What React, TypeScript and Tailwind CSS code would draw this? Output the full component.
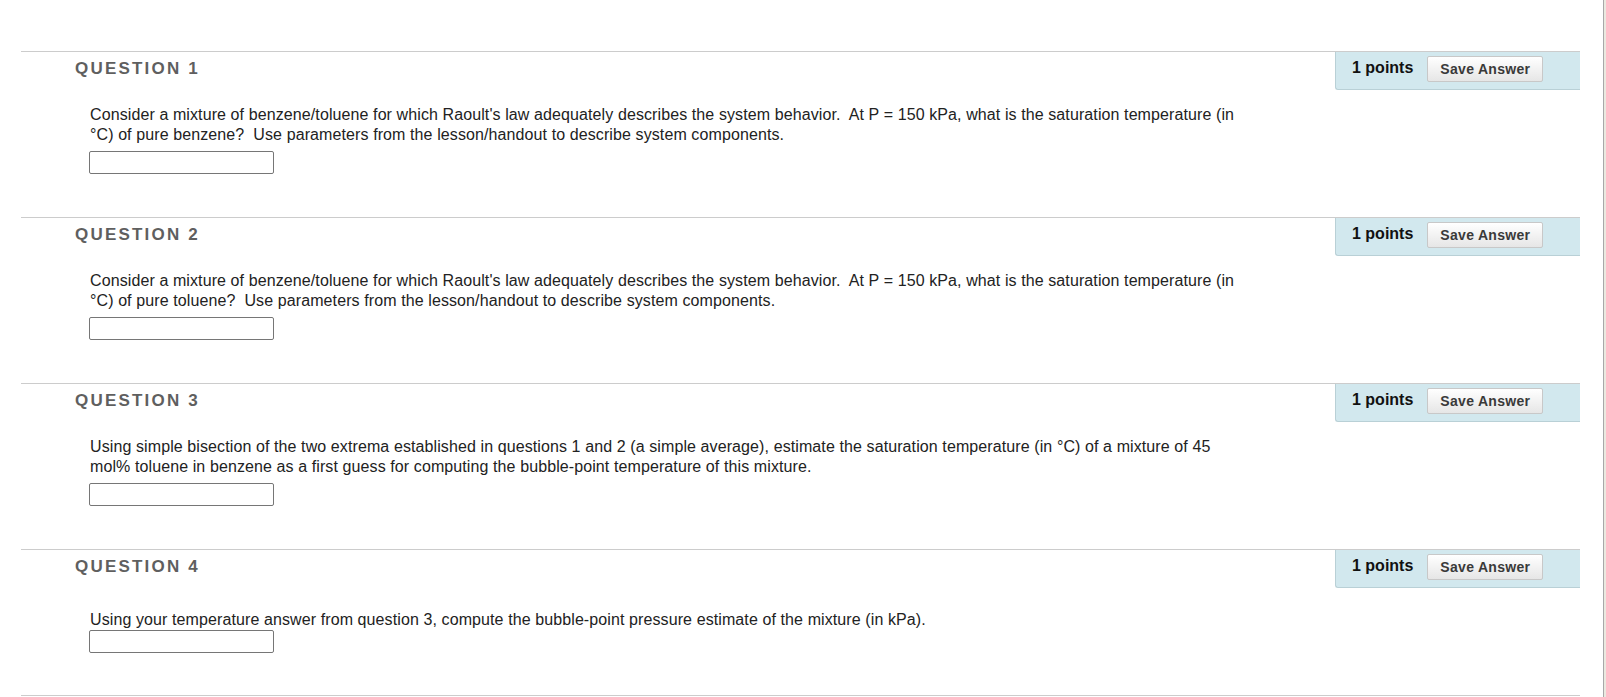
import React from 'react';

interface Question {
  id: number;
  text: string;
}

const questions: Question[] = [
  {
    id: 1,
    text: "Consider a mixture of benzene/toluene for which Raoult's law adequately describes the system behavior.\u00a0 At P = 150 kPa, what is the saturation temperature (in °C) of pure benzene?\u00a0 Use parameters from the lesson/handout to describe system components.",
  },
  {
    id: 2,
    text: "Consider a mixture of benzene/toluene for which Raoult's law adequately describes the system behavior.\u00a0 At P = 150 kPa, what is the saturation temperature (in °C) of pure toluene?\u00a0 Use parameters from the lesson/handout to describe system components.",
  },
  {
    id: 3,
    text: 'Using simple bisection of the two extrema established in questions 1 and 2 (a simple average), estimate the saturation temperature (in °C) of a mixture of 45 mol% toluene in benzene as a first guess for computing the bubble-point temperature of this mixture.',
  },
  {
    id: 4,
    text: 'Using your temperature answer from question 3, compute the bubble-point pressure estimate of the mixture (in kPa).',
  },
];

const QuestionBlock: React.FC<{ q: Question; last: boolean }> = ({ q, last }) => (
  <div className={`border-t border-[#cccccc] ${last ? 'h-[146px]' : 'h-[166px]'}`}>
    {/* header row */}
    <div className="flex justify-between">
      <h3 className="pl-[54px] pt-[7px] text-[17px] leading-[20px] font-bold tracking-[2.2px] text-[#5f5f5f]">
        QUESTION {q.id}
      </h3>
      <div className="w-[245px] h-[38px] bg-[#d2e8ee] border-l border-b border-[#b9d0d6] rounded-bl-[3px] flex items-start pl-[16px] pt-[4px]">
        <span className="text-[16px] leading-[20px] font-bold text-[#111] mt-[2px]">1 points</span>
        <button className="ml-[14px] w-[116px] h-[26px] border border-[#c8c8c8] rounded-[2px] bg-gradient-to-b from-[#ffffff] to-[#e6e6e6] text-[14px] font-bold text-[#3a3a3a] tracking-[0.3px]">
          Save Answer
        </button>
      </div>
    </div>

    {/* body */}
    <p
      className={`${last ? 'mt-[22px]' : 'mt-[15px]'} ml-[69px] w-[1152px] text-[16px] leading-[20px] tracking-[0.1px] text-[#222]`}
    >
      {q.text}
    </p>
    <input
      type="text"
      className={`block ${last ? 'mt-0' : 'mt-[6px]'} ml-[68px] w-[185px] h-[23px] border border-[#767676] rounded-[2px] bg-white`}
    />
  </div>
);

export default function App() {
  return (
    <div className="w-[1606px] h-[697px] flex bg-white overflow-hidden" style={{ fontFamily: '"Liberation Sans", Arial, sans-serif' }}>
      <div className="w-[1603px] pl-[21px] pt-[51px]">
        <div className="w-[1559px]">
          {questions.map((q, i) => (
            <QuestionBlock key={q.id} q={q} last={i === questions.length - 1} />
          ))}
          <div className="border-t border-[#cccccc]" />
        </div>
      </div>
      <div className="w-px bg-[#a8a8a8]" />
      <div className="flex-1 bg-[#ebe9e0]" />
    </div>
  );
}
